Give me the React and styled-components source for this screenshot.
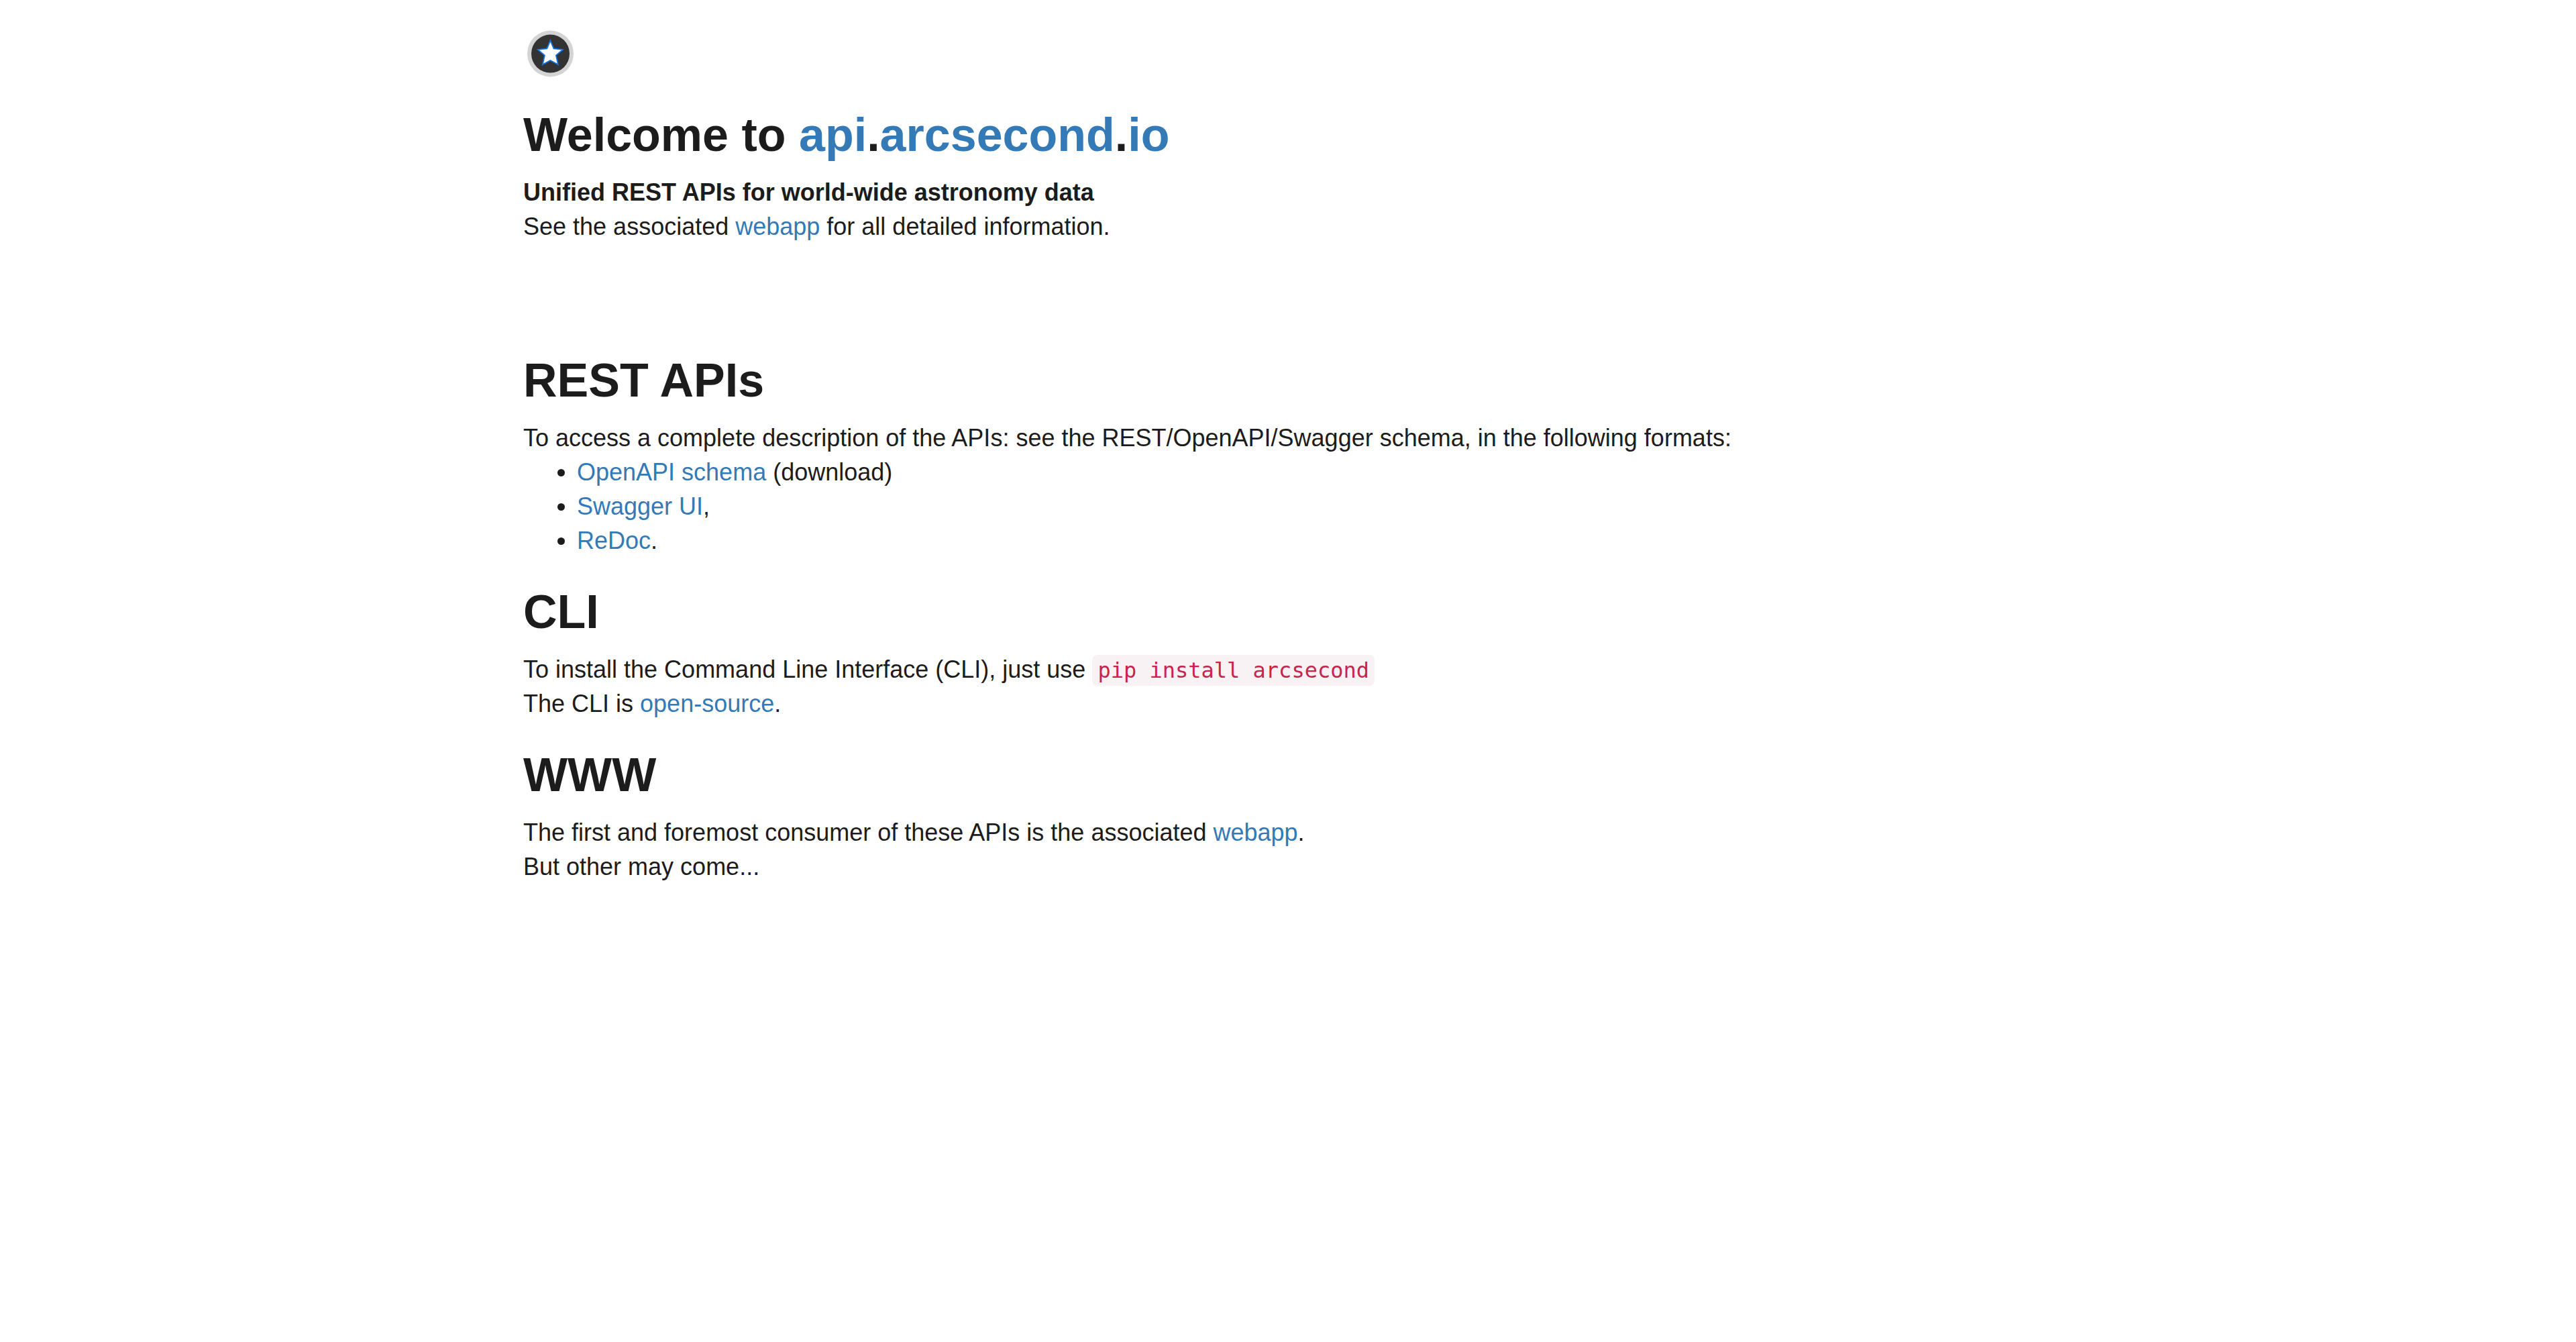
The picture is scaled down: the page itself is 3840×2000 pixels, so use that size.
import React from "react";
import styled, { createGlobalStyle } from "styled-components";

const GlobalStyle = createGlobalStyle`
  *, *::before, *::after { box-sizing: border-box; }
  body {
    margin: 0;
    background: #fff;
    color: #1c1c1c;
    font-family: "Helvetica Neue", "Liberation Sans", Arial, sans-serif;
    font-size: 36px;
    line-height: 51px;
  }
`;

const Container = styled.main`
  max-width: 2340px;
  margin: 0 auto;
  padding: 40px 30px;
`;

const Logo = styled.svg`
  display: block;
  width: 80px;
  height: 80px;
`;

const Section = styled.section`
  margin-top: ${({ $spaced }) => ($spaced ? "164px" : "41px")};
`;

const Heading = styled.h1`
  margin: 0 0 20px;
  font-size: 70px;
  font-weight: 700;
  line-height: 80px;
`;

const Text = styled.p`
  margin: 0;
`;

const List = styled.ul`
  margin: 0;
  padding-left: 80px;
`;

const Link = styled.a`
  color: #337ab7;
  text-decoration: none;
  &:hover { text-decoration: underline; }
`;

const Code = styled.code`
  padding: 4px 8px;
  border-radius: 8px;
  background: #f9f2f4;
  color: #c7254e;
  font-family: Menlo, "DejaVu Sans Mono", monospace;
  font-size: 32px;
  line-height: 32px;
`;

function StarLogo() {
  return (
    <Logo viewBox="0 0 80 80" role="img" aria-label="Arcsecond">
      <circle cx="40.5" cy="40" r="34.5" fill="#d4d4d4" />
      <circle cx="40.5" cy="40" r="28.5" fill="#333" />
      <path
        d="M40.4 20.3 45.4 32.4 59 33.9 48.9 42.6 52 56.3 40.4 50 28.8 56.3 31.9 42.6 21.8 33.9 35.4 32.4Z"
        fill="#fff"
        stroke="#1272e0"
        strokeWidth="1.8"
      />
    </Logo>
  );
}

export default function App() {
  return (
    <>
      <GlobalStyle />
      <Container>
        <StarLogo />
        <Section>
          <Heading>
            Welcome to <Link href="#api">api</Link>.<Link href="#arcsecond">arcsecond</Link>.<Link href="#io">io</Link>
          </Heading>
          <Text><strong>Unified REST APIs for world-wide astronomy data</strong></Text>
          <Text>See the associated <Link href="#webapp">webapp</Link> for all detailed information.</Text>
        </Section>
        <Section $spaced>
          <Heading>REST APIs</Heading>
          <Text>To access a complete description of the APIs: see the REST/OpenAPI/Swagger schema, in the following formats:</Text>
          <List>
            <li><Link href="#schema">OpenAPI schema</Link> (download)</li>
            <li><Link href="#swagger">Swagger UI</Link>,</li>
            <li><Link href="#redoc">ReDoc</Link>.</li>
          </List>
        </Section>
        <Section>
          <Heading>CLI</Heading>
          <Text>To install the Command Line Interface (CLI), just use <Code>pip install arcsecond</Code></Text>
          <Text>The CLI is <Link href="#source">open-source</Link>.</Text>
        </Section>
        <Section>
          <Heading>WWW</Heading>
          <Text>The first and foremost consumer of these APIs is the associated <Link href="#webapp">webapp</Link>.</Text>
          <Text>But other may come...</Text>
        </Section>
      </Container>
    </>
  );
}
